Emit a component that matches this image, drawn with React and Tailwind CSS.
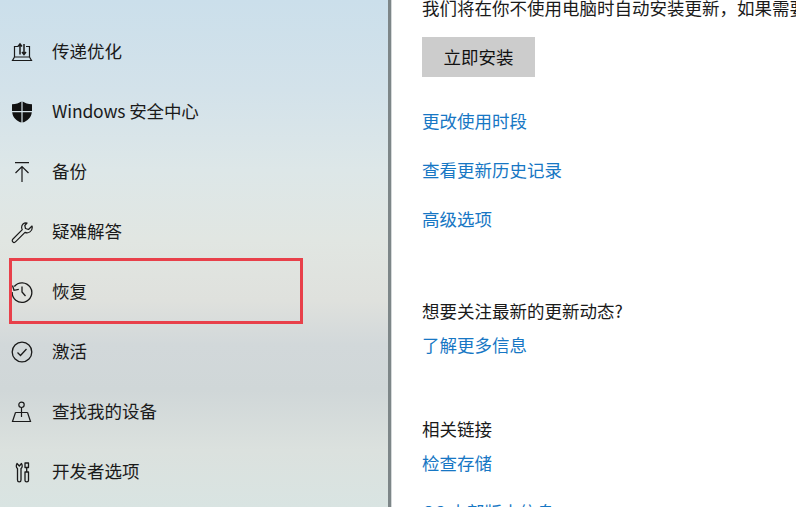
import React from "react";

const Delivery = () => (
  <svg width="24" height="24" viewBox="0 0 24 24" fill="none" stroke="#1a1a1a" strokeWidth="1.2">
    <path d="M4.500 17V6.500h3.500M19.500 17V6.500H16" />
    <path d="M4.500 17L2.500 20.500h19L19.500 17z" />
    <path d="M10 14.500V4M8 6.500L10 4l2 2.500M14 4v10.500M12 12L14 14.500l2-2.500" strokeWidth="1.5" />
  </svg>
);

const Shield = () => (
  <svg width="24" height="24" viewBox="0 0 24 24" fill="#111">
    <path d="M11.400 1.500C9 3.100 6 4 2 4.300V11h9.400zM12.600 1.500c2.400 1.600 5.400 2.500 9.400 2.800V11h-9.400zM2.200 12.200h9.200V22.500C6.500 21 2.800 17.500 2.200 12.200zM12.600 12.200h9.200c-.6 5.300-4.300 8.800-9.200 10.300z" />
  </svg>
);

const ArrowUp = () => (
  <svg width="24" height="24" viewBox="0 0 24 24" fill="none" stroke="#1a1a1a" strokeWidth="1.200">
    <path d="M5 2.700h14M12 22V6.500M5.500 13L12 6.500l6.500 6.500" />
  </svg>
);

const Wrench = () => (
  <svg width="24" height="24" viewBox="0 0 24 24" fill="none" stroke="#1a1a1a" strokeWidth="1.200" strokeLinejoin="round">
    <path d="M17 3c-3-.7-5.800 1.800-5.300 5 .1.700.3 1.200.6 1.700L3 19c-1 1-1 2.100-.2 2.900.8.800 1.900.8 2.900-.2l9.300-9.300c3.300 1.500 7.500-1.200 7.200-5.100 0-.5-.1-.9-.2-1.300L18.500 9.500 15.500 8.500 14.800 5.500z" />
  </svg>
);

const History = () => (
  <svg width="24" height="24" viewBox="0 0 24 24" fill="none" stroke="#1a1a1a" strokeWidth="1.300">
    <path d="M4.300 6.500A9.800 9.800 0 1 1 2.200 12" />
    <path d="M2.500 5.500l1.500 4.800 4.800-1M12 6.500V12l3.500 4" />
  </svg>
);

const Check = () => (
  <svg width="24" height="24" viewBox="0 0 24 24" fill="none" stroke="#1a1a1a" strokeWidth="1.300">
    <circle cx="12" cy="12" r="9.800" />
    <path d="M7.500 12.500l3 3 6-6.500" />
  </svg>
);

const FindDevice = () => (
  <svg width="24" height="24" viewBox="0 0 24 24" fill="none" stroke="#1a1a1a" strokeWidth="1.200">
    <circle cx="11.500" cy="4.800" r="2.700" />
    <path d="M11.500 7.500V17M5.500 12.500h12M5.500 12.500L2.500 21.500h18l-3-9" />
  </svg>
);

const DevTools = () => (
  <svg width="24" height="24" viewBox="0 0 24 24" fill="none" stroke="#1a1a1a" strokeWidth="1.300" strokeLinejoin="round">
    <path d="M7 3.500C6 5 6 7.500 7.500 8.500V20c0 2.500 3.500 2.500 3.500 0V8.500c1.500-1 1.500-3.500.5-5L9.300 6z" />
    <path d="M15 3h3.500v4.500H15zM16.700 7.500V12M15 12h3.500v8.500c0 1.800-3.500 1.800-3.500 0z" />
  </svg>
);

const menu = [
  { label: "传递优化", icon: <Delivery /> },
  { label: "Windows 安全中心", icon: <Shield />, extra: "tracking-[-0.15px]" },
  { label: "备份", icon: <ArrowUp /> },
  { label: "疑难解答", icon: <Wrench /> },
  { label: "恢复", icon: <History /> },
  { label: "激活", icon: <Check /> },
  { label: "查找我的设备", icon: <FindDevice /> },
  { label: "开发者选项", icon: <DevTools /> },
];

const font = "font-['Noto_Sans_CJK_SC','Noto_Sans',sans-serif]";

const App = () => {
  return (
    <div className={`relative flex h-[507px] w-[796px] overflow-hidden bg-white text-[17.5px] ${font}`}>
      <aside className="h-full w-[388px] shrink-0 bg-[linear-gradient(180deg,#cbdfeb_0px,#d3e2ea_90px,#dde7e8_170px,#e1e6e2_240px,#dfe1dd_300px,#d2d8da_345px,#d0d7d8_390px,#dbe1de_450px,#d9e4e2_507px)] pt-[22px]">
        {menu.map((item) => (
          <div key={item.label} className="flex h-[60px] items-center text-[#1a1a1a]">
            <span className="ml-[10px] flex h-6 w-6 items-center justify-center">{item.icon}</span>
            <span className={`mb-[2px] ml-[18px] whitespace-nowrap ${item.extra || ""}`}>{item.label}</span>
          </div>
        ))}
      </aside>

      <div className="h-full w-[3px] shrink-0 bg-[#7d8688]" />
      <div className="h-full w-px shrink-0 bg-[#d5d9da]" />

      <main className="ml-[30px] mt-[-4px] flex-1 whitespace-nowrap leading-6 text-[#1a1a1a]">
        <p className="w-[374px] overflow-hidden">我们将在你不使用电脑时自动安装更新，如果需要重新启动</p>
        <button className="mt-[17px] h-10 w-[113px] bg-[#cccccc] text-[#111]">立即安装</button>
        <div className="mt-[32px] flex flex-col gap-[25px] text-[#1777c4]">
          <a>更改使用时段</a>
          <a>查看更新历史记录</a>
          <a>高级选项</a>
        </div>
        <p className="mt-[68px]">想要关注最新的更新动态?</p>
        <a className="mt-[10px] block text-[#1777c4]">了解更多信息</a>
        <p className="mt-[60px]">相关链接</p>
        <a className="mt-[10px] block text-[#1777c4]">检查存储</a>
        <a className="mt-[25px] block text-[#1777c4]">OS 内部版本信息</a>
      </main>

      <div className="absolute left-[9px] top-[258px] h-[66px] w-[294px] border-[3px] border-[#e8404a]" />
    </div>
  );
};

export default App;
